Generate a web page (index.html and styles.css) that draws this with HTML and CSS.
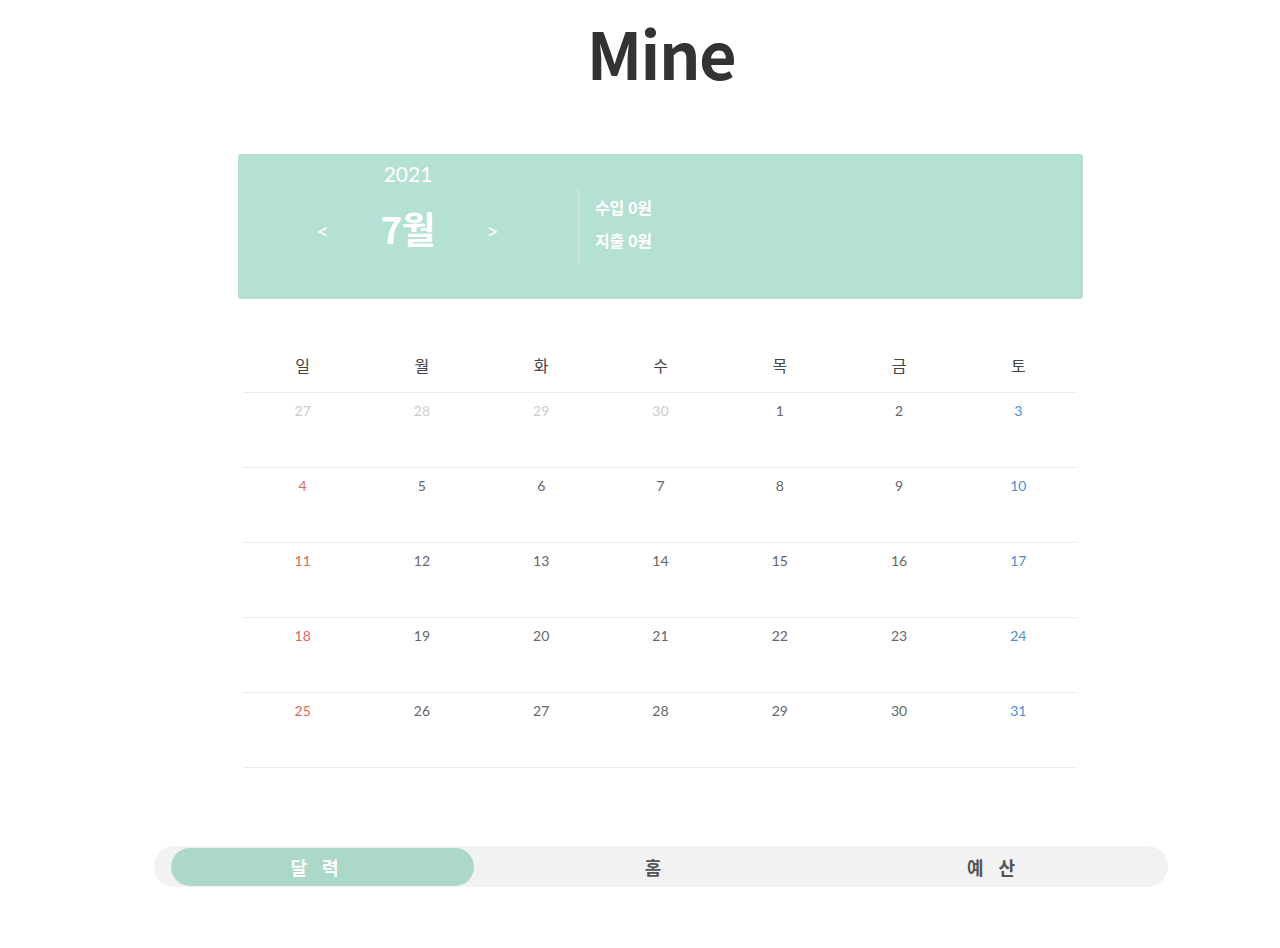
FILE: index.html
```html
<!DOCTYPE html>
<html lang="ko">
<head>
<meta charset="utf-8">
<title>Mine</title>
<link rel="stylesheet" href="styles.css">
</head>
<body>
<div class="page">
  <div class="app">
    <h1 class="title">Mine</h1>

    <section class="summary">
      <div class="month-nav">
        <div class="year">2021</div>
        <div class="month-row">
          <button class="arrow">&lt;</button>
          <div class="month">7월</div>
          <button class="arrow">&gt;</button>
        </div>
      </div>
      <div class="divider"></div>
      <div class="totals">
        <div class="total">수입 0원</div>
        <div class="total">지출 0원</div>
      </div>
    </section>

    <section class="calendar">
      <div class="week head">
        <div class="dname">일</div>
        <div class="dname">월</div>
        <div class="dname">화</div>
        <div class="dname">수</div>
        <div class="dname">목</div>
        <div class="dname">금</div>
        <div class="dname">토</div>
      </div>
      <div class="week">
        <div class="day other">27</div>
        <div class="day other">28</div>
        <div class="day other">29</div>
        <div class="day other">30</div>
        <div class="day">1</div>
        <div class="day">2</div>
        <div class="day sat">3</div>
      </div>
      <div class="week">
        <div class="day sun">4</div>
        <div class="day">5</div>
        <div class="day">6</div>
        <div class="day">7</div>
        <div class="day">8</div>
        <div class="day">9</div>
        <div class="day sat">10</div>
      </div>
      <div class="week">
        <div class="day sun">11</div>
        <div class="day">12</div>
        <div class="day">13</div>
        <div class="day">14</div>
        <div class="day">15</div>
        <div class="day">16</div>
        <div class="day sat">17</div>
      </div>
      <div class="week">
        <div class="day sun">18</div>
        <div class="day">19</div>
        <div class="day">20</div>
        <div class="day">21</div>
        <div class="day">22</div>
        <div class="day">23</div>
        <div class="day sat">24</div>
      </div>
      <div class="week">
        <div class="day sun">25</div>
        <div class="day">26</div>
        <div class="day">27</div>
        <div class="day">28</div>
        <div class="day">29</div>
        <div class="day">30</div>
        <div class="day sat">31</div>
      </div>
    </section>

    <nav class="tabs">
      <div class="tab"><span class="pill"><span class="label">달 력</span></span></div>
      <div class="tab"><span class="label">홈</span></div>
      <div class="tab"><span class="label">예 산</span></div>
    </nav>
  </div>
</div>
</body>
</html>
```

FILE: styles.css
```css
* { box-sizing: border-box; }

html, body {
  margin: 0;
  padding: 0;
  background: #ffffff;
}

body {
  font-family: "Noto Sans CJK KR", "Noto Sans", sans-serif;
  color: #333;
}

.page {
  padding-left: 42px;
}

.app {
  width: 1014px;
  margin: 0 auto;
}

.title {
  margin: 19px 0 69px;
  font-size: 65px;
  line-height: 66px;
  font-weight: 700;
  text-align: center;
  color: #333333;
  letter-spacing: -1.5px;
}

/* Summary box */
.summary {
  width: 845px;
  height: 145px;
  margin-left: 84px;
  background: #b5e0d4;
  border-radius: 3px;
  display: flex;
  align-items: flex-start;
  color: #ffffff;
}

.month-nav {
  width: 339px;
  display: flex;
  flex-direction: column;
  align-items: center;
  padding-top: 6px;
}

.year {
  font-family: "Lato", "Liberation Sans", sans-serif;
  font-size: 21px;
  line-height: 28px;
  padding-left: 1px;
}

.month-row {
  display: flex;
  align-items: center;
  gap: 52px;
  margin-top: 12px;
  padding-left: 0;
}

.arrow {
  border: 0;
  background: transparent;
  color: #ffffff;
  font-family: "Lato", "Liberation Sans", sans-serif;
  font-size: 21px;
  padding: 0;
  width: 12px;
  line-height: 24px;
  margin-top: 6px;
  cursor: pointer;
}

.month {
  font-size: 37px;
  font-weight: 700;
  line-height: 56px;
  letter-spacing: -1px;
}

.divider {
  width: 3px;
  height: 75px;
  margin-top: 35px;
  background: #cde0da;
}

.totals {
  display: flex;
  flex-direction: column;
  gap: 10px;
  padding-left: 15px;
  padding-top: 42px;
}

.total {
  font-size: 16px;
  font-weight: 700;
  line-height: 23px;
  letter-spacing: -0.3px;
}

/* Calendar */
.calendar {
  width: 835px;
  margin: 42px 0 0 89px;
}

.week {
  display: grid;
  grid-template-columns: repeat(7, 1fr);
  border-bottom: 1px solid #ececec;
  height: 75px;
}

.week.head {
  height: 52px;
  align-items: center;
}

.dname {
  text-align: center;
  font-size: 16px;
  color: #444444;
  line-height: 24px;
  padding-bottom: 4px;
}

.day {
  text-align: center;
  font-family: "Lato", "Liberation Sans", sans-serif;
  font-size: 14px;
  line-height: 17px;
  padding-top: 9px;
  color: #666666;
}

.day.other { color: #cccccc; }
.day.sun { color: #d9695b; }
.day.sat { color: #4a90d0; }

/* Tabs */
.tabs {
  margin-top: 78px;
  height: 41px;
  background: #f2f2f2;
  border-radius: 21px;
  display: grid;
  grid-template-columns: repeat(3, 1fr);
  align-items: center;
}

.tab {
  display: flex;
  justify-content: center;
  align-items: center;
  height: 41px;
}

.tab .label {
  font-size: 18px;
  font-weight: 700;
  color: #555555;
  letter-spacing: 5px;
  padding-right: 11px;
  line-height: 26px;
}

.tab:first-child {
  justify-content: flex-start;
}

.pill {
  margin-left: 17px;
  width: 303px;
  height: 38px;
  border-radius: 19px;
  background: #acd8ca;
  display: flex;
  justify-content: center;
  align-items: center;
}

.pill .label {
  color: #ffffff;
}
```
